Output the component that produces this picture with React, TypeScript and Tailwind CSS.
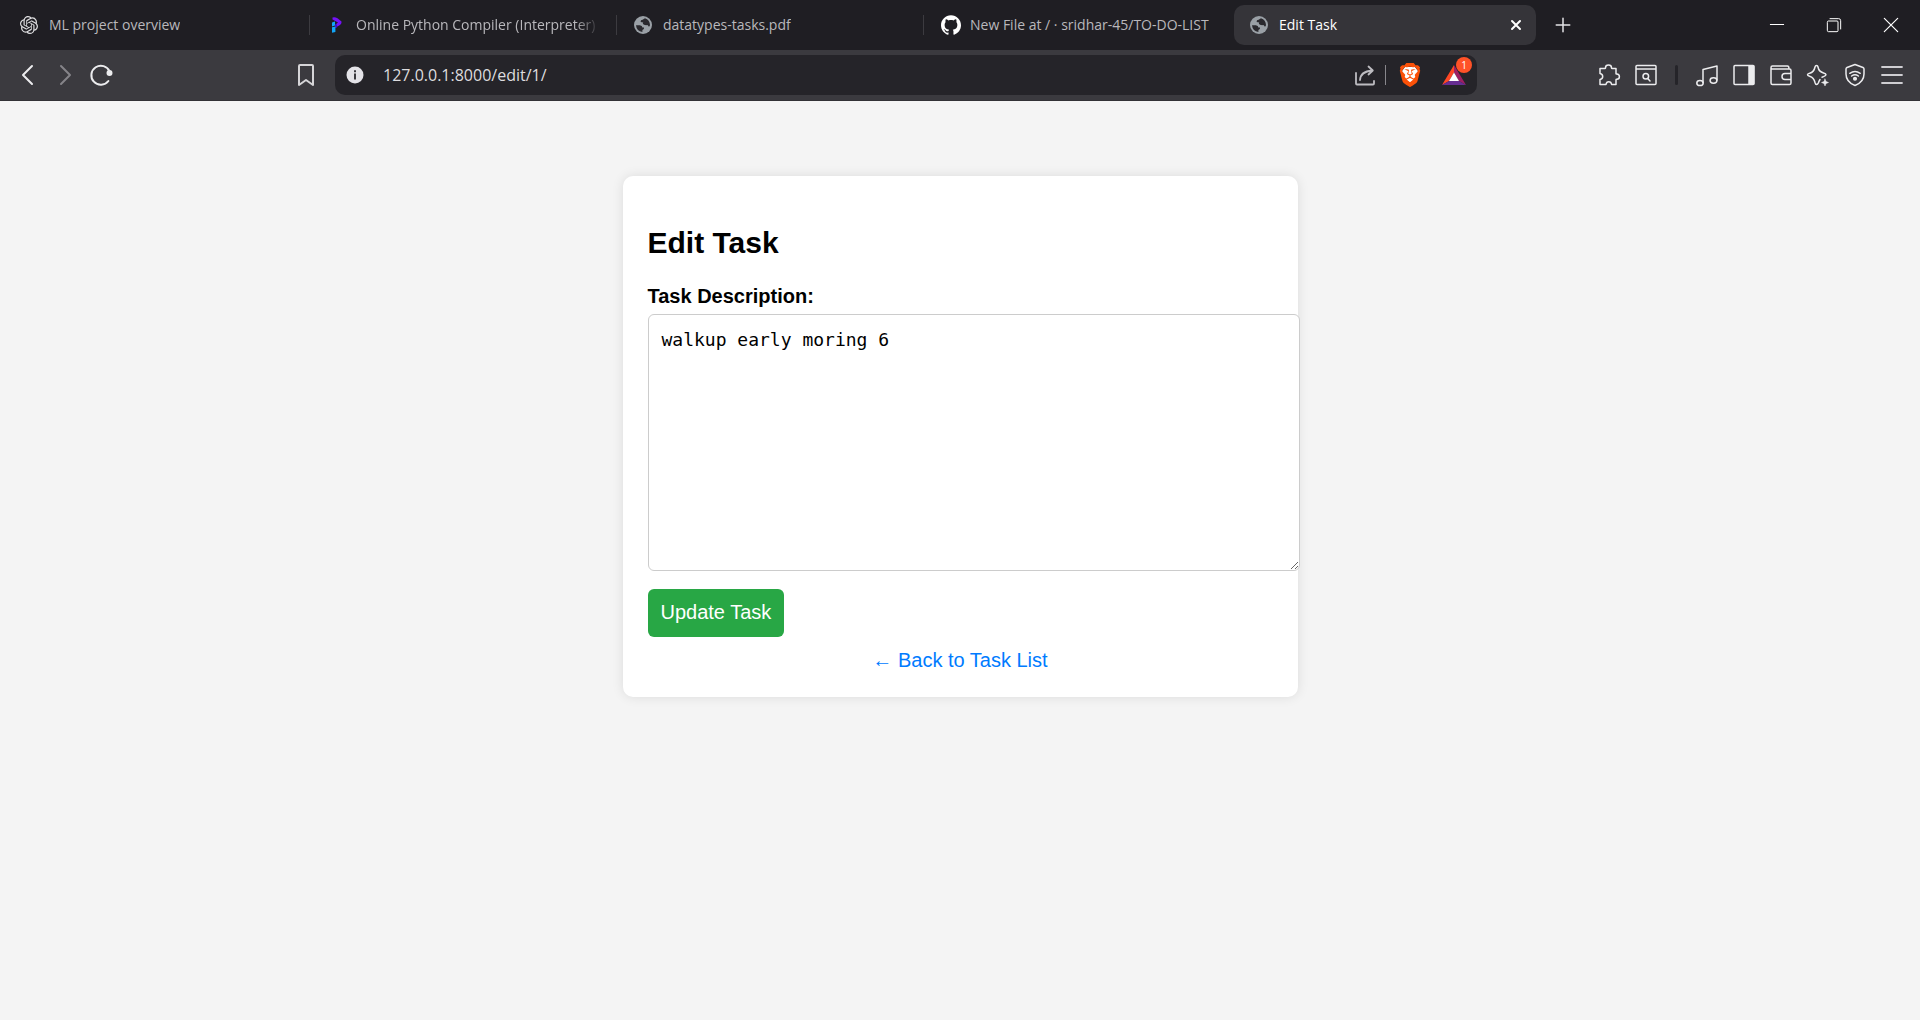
import React from "react";
import { SiBrave, SiGithub, SiOpenai } from "react-icons/si";

type IconProps = { className?: string };

function GlobeIcon({ className }: IconProps) {
  return (
    <svg viewBox="0 0 18 18" className={className} aria-hidden="true">
      <circle cx="9" cy="9" r="9" fill="#9aa0a6" />
      <path
        d="M2 9.2 L5.8 9.2 Q8.4 9.4 8.4 11.4 L10 11.6 Q10.6 13.6 8.4 13.9 L8.4 16 Q2.6 15.2 2 9.2 Z"
        fill="#2a292e"
      />
      <path
        d="M11 2.2 Q15.8 4 16 9 Q15.6 11 14.6 10.4 Q13.6 8.4 12.2 9.2 L10 8.8 Q8 7.6 9.2 6.4 L6.6 6 Q6.4 3.8 8.6 3.8 Z"
        fill="#2a292e"
      />
    </svg>
  );
}

function ProgramizIcon({ className }: IconProps) {
  return (
    <svg viewBox="0 0 11 16" className={className} aria-hidden="true">
      <path d="M1.5 0.5 Q4 -0.2 6.5 1.2 L10.5 4.6 Q10.8 6.6 9 8 L4.6 10.6 L4 8 L7 5.4 L1.5 2.4 Z" fill="#7412f7" />
      <path d="M1 5.6 L4 4.4 L4 8.6 L1 9.6 Z" fill="#12a5f7" />
      <path d="M4 8 L6 7 L6 10.4 L4 11 Z" fill="#3a0fd0" />
      <path d="M1 10.2 L4.4 9.4 L4.4 15 L1 15.8 Z" fill="#12a5f7" />
    </svg>
  );
}

function Stroke({ className, children, w = 1.5 }: IconProps & { children: React.ReactNode; w?: number }) {
  return (
    <svg
      viewBox="0 0 24 24"
      className={className}
      fill="none"
      stroke="currentColor"
      strokeWidth={w}
      strokeLinecap="round"
      strokeLinejoin="round"
      aria-hidden="true"
    >
      {children}
    </svg>
  );
}

function BraveIcon() {
  return (
    <svg viewBox="0 0 24 24" className="size-6" aria-hidden="true">
      <path d="M7 4 H17 L20 8 L17 18 L12 22 L7 18 L4 8 Z" fill="#fff" />
      <SiBrave color="#fb5108" size={24} />
    </svg>
  );
}

function RewardsIcon() {
  return (
    <svg viewBox="0 0 24 20" className="h-5 w-6" aria-hidden="true">
      <path d="M12 0 L0 20 L7 16 L12 7.5 Z" fill="#ff4724" />
      <path d="M12 0 L24 20 L17 16 L12 7.5 Z" fill="#9e1f63" />
      <path d="M0 20 H24 L17 16 H7 Z" fill="#662d91" />
      <path d="M12 7.5 L17 16 H7 Z" fill="#fff" />
    </svg>
  );
}

type TabProps = { icon: React.ReactNode; title: string; first?: boolean; fade?: boolean };

function Tab({ icon, title, first = false, fade = false }: TabProps) {
  return (
    <div className="flex h-10 w-[307px] min-w-0 items-center">
      <span className={first ? "ml-0.5 w-px" : "ml-0.5 h-5 w-px bg-[#3c3b40]"} />
      <button type="button" className="flex min-w-0 flex-1 items-center pl-[17px] text-left">
        <span className="flex w-[29px] shrink-0 items-center">{icon}</span>
        <span
          className={
            fade
              ? "w-[244px] overflow-hidden whitespace-nowrap [mask-image:linear-gradient(to_right,black_90%,transparent)]"
              : "truncate"
          }
        >
          {title}
        </span>
      </button>
    </div>
  );
}

function TabStrip() {
  return (
    <div className="flex h-[50px] items-center bg-[#1f1e23] text-sm text-[#b9b8bc]">
      <Tab icon={<SiOpenai className="size-[18px] text-[#dedee0]" />} title="ML project overview" first />
      <Tab icon={<ProgramizIcon className="ml-1 h-4 w-[11px]" />} title="Online Python Compiler (Interpreter)" fade />
      <Tab icon={<GlobeIcon className="size-[18px]" />} title="datatypes-tasks.pdf" />
      <Tab icon={<SiGithub className="size-5 text-white" />} title="New File at / · sridhar-45/TO-DO-LIST" />
      <div className="ml-1.5 flex h-10 w-[302px] items-center rounded-[10px] bg-[#353439] pr-3.5 pl-4 text-white">
        <button type="button" className="flex flex-1 items-center gap-[11px] text-left">
          <GlobeIcon className="size-[18px]" />
          Edit Task
        </button>
        <button type="button" aria-label="Close tab">
          <Stroke className="size-3" w={4}>
            <path d="M4 4 L20 20 M20 4 L4 20" />
          </Stroke>
        </button>
      </div>
      <button type="button" aria-label="New tab" className="ml-[18px] text-[#e4e3e6]">
        <Stroke className="size-[18px]" w={2}>
          <path d="M12 3 V21 M3 12 H21" />
        </Stroke>
      </button>
      <div className="ml-auto flex items-center gap-[41px] pr-[21px] text-white">
        <button type="button" aria-label="Minimize">
          <Stroke className="size-4">
            <path d="M2 11.25 H22" />
          </Stroke>
        </button>
        <button type="button" aria-label="Restore">
          <Stroke className="size-4">
            <path d="M2 7.5 Q2 6 3.5 6 H16.5 Q18 6 18 7.5 V20.5 Q18 22 16.5 22 H3.5 Q2 22 2 20.5 Z M6 2.5 H19 Q22 2.5 22 5.5 V18" />
          </Stroke>
        </button>
        <button type="button" aria-label="Close window">
          <Stroke className="size-4" w={1.8}>
            <path d="M2 2 L22 22 M22 2 L2 22" />
          </Stroke>
        </button>
      </div>
    </div>
  );
}

function Toolbar() {
  return (
    <div className="flex h-[51px] items-center border-b border-[#323136] bg-[#3b3a3f] text-[#ececee]">
      <div className="flex w-[335px] items-center pr-5 pl-4">
        <button type="button" aria-label="Back">
          <Stroke className="size-6" w={2}>
            <path d="M16 3 L7 12 L16 21" />
          </Stroke>
        </button>
        <button type="button" aria-label="Forward" className="ml-[13px] text-[#858489]">
          <Stroke className="size-6" w={2}>
            <path d="M8 3 L17 12 L8 21" />
          </Stroke>
        </button>
        <button type="button" aria-label="Reload" className="ml-3">
          <Stroke className="size-6" w={2}>
            <path d="M19.4 18 A9.5 9.5 0 1 1 20.6 8.5" />
            <circle cx="20.5" cy="10" r="2" fill="currentColor" />
          </Stroke>
        </button>
        <button type="button" aria-label="Bookmark this page" className="ml-auto text-[#d6d5d8]">
          <svg
            viewBox="0 0 18 24"
            className="h-6 w-[18px]"
            fill="none"
            stroke="currentColor"
            strokeWidth="2"
            strokeLinejoin="round"
            aria-hidden="true"
          >
            <path d="M2 3 Q2 2 3 2 H15 Q16 2 16 3 V22 L9 17 L2 22 Z" />
          </svg>
        </button>
      </div>
      <div className="flex h-10 min-w-0 flex-1 items-center rounded-[10px] bg-[#252429] px-[11px]">
        <svg viewBox="0 0 18 18" className="size-[18px]" aria-hidden="true">
          <circle cx="9" cy="9" r="8.5" fill="#e4e3e8" />
          <path d="M8 7.5 H10 V13.5 H8 Z M8 4.2 H10 V6.2 H8 Z" fill="#3a393e" />
        </svg>
        <input
          aria-label="Address"
          defaultValue="127.0.0.1:8000/edit/1/"
          className="ml-[19px] min-w-0 flex-1 bg-transparent text-base text-[#dddcdf] outline-none"
        />
        <button type="button" aria-label="Share" className="text-[#bdbcc1]">
          <Stroke className="size-6" w={1.8}>
            <path d="M3 10 V20.5 Q3 21.5 4 21.5 H20 Q21 21.5 21 20.5 V18 M7 17 Q7.5 8.5 19 7.5 M15.5 3.5 L19.8 7.5 L15.5 11.5" />
          </Stroke>
        </button>
        <span className="mr-3 ml-2 h-5 w-px bg-[#88878c]" />
        <button type="button" aria-label="Brave Shields">
          <BraveIcon />
        </button>
        <button type="button" aria-label="Brave Rewards" className="relative ml-5">
          <RewardsIcon />
          <span className="absolute -top-2 left-3.5 flex size-4 items-center justify-center rounded-full bg-[#ff5227] text-[10px] text-white">
            1
          </span>
        </button>
      </div>
      <div className="flex w-[443px] items-center justify-end gap-[13px] pr-4">
        <button type="button" aria-label="Extensions">
          <Stroke className="size-6">
            <path d="M3 5.5 H8 Q8.6 5.4 8.5 4.6 Q8.6 2 11.5 2 Q14.4 2 14.5 4.6 Q14.4 5.4 15 5.5 H19 V10.4 Q19 11.2 19.8 11.1 Q22.4 11.2 22.4 13.7 Q22.4 16.2 19.8 16.3 Q19 16.2 19 17 V21.5 H14.6 Q14.2 18.7 11.8 18.7 Q9.4 18.7 9 21.5 H3 V16.5 Q5.7 16.2 5.7 13.6 Q5.7 11 3 10.6 Z" />
          </Stroke>
        </button>
        <button type="button" aria-label="Search tabs">
          <Stroke className="size-6">
            <path d="M2 3.5 Q2 2.5 3 2.5 H21 Q22 2.5 22 3.5 V20.5 Q22 21.5 21 21.5 H3 Q2 21.5 2 20.5 Z M2 6 H22 M13.7 15.5 L16 18" />
            <circle cx="11.8" cy="13.3" r="2.8" />
          </Stroke>
        </button>
        <span className="mx-1 h-5 w-[3px] rounded bg-[#252429]" />
        <button type="button" aria-label="Media">
          <Stroke className="size-6">
            <path d="M8 19.5 V6.5 L22 3 V17" />
            <ellipse cx="5" cy="20" rx="3.2" ry="2.6" />
            <ellipse cx="18.5" cy="17.5" rx="3.4" ry="2.7" />
          </Stroke>
        </button>
        <button type="button" aria-label="Sidebar">
          <Stroke className="size-6">
            <path d="M2 3.5 Q2 2.5 3 2.5 H21 Q22 2.5 22 3.5 V20.5 Q22 21.5 21 21.5 H3 Q2 21.5 2 20.5 Z" />
            <path d="M17 3 H21.5 V21 H17 Z" fill="currentColor" />
          </Stroke>
        </button>
        <button type="button" aria-label="Wallet">
          <Stroke className="size-6">
            <path d="M2 5 V20 Q2 21.5 3.5 21.5 H20.5 Q22 21.5 22 20 V7.5 Q22 6 20.5 6 H3 Q2 6 2 4.5 Q2 3 3.5 3 H18.5 Q19.8 3 20 5.5 M22 10.5 H16 Q13 10.5 13 13.5 Q13 16.5 16 16.5 H22" />
          </Stroke>
        </button>
        <button type="button" aria-label="Leo AI">
          <Stroke className="size-6">
            <path d="M14 16.5 Q13 18 12.3 20 Q11.6 21.5 10.5 21.5 Q9.5 21.5 9 19.5 Q8 14.6 3.6 13.2 Q1.5 12.6 1.5 11.8 Q1.5 10.8 3.6 10.3 Q8 9 9 4 Q9.4 2.5 10.5 2.5 Q11.7 2.5 12 4 Q12.8 8.6 17.5 10 Q20 10.8 20 11.8 Q20 12.6 17.5 13.6 L16 14.2" />
            <path d="M19 16 L20 18.5 L22.5 19.5 L20 20.5 L19 23 L18 20.5 L15.5 19.5 L18 18.5 Z" fill="currentColor" strokeWidth="0.5" />
          </Stroke>
        </button>
        <button type="button" aria-label="VPN">
          <Stroke className="size-6">
            <path d="M12 1.5 L20 4.5 Q21 5 21 6 V11 Q21 19 12 22.5 Q3 19 3 11 V6 Q3 5 4 4.5 Z M6.8 10.3 Q12 6.8 17.2 10.3 M8.6 13 Q12 10.6 15.4 13" />
            <circle cx="12" cy="15.8" r="1.3" fill="currentColor" />
          </Stroke>
        </button>
        <button type="button" aria-label="Menu" className="text-[#cfced2]">
          <Stroke className="size-6" w={1.8}>
            <path d="M2 4 H22 M2 12 H22 M2 20 H22" />
          </Stroke>
        </button>
      </div>
    </div>
  );
}

export default function App() {
  return (
    <div className="min-h-screen bg-[#f4f4f4]">
      <header className="font-['Open_Sans','Noto_Sans',sans-serif]">
        <TabStrip />
        <Toolbar />
      </header>
      <main className="px-4 pt-[75px] font-['Liberation_Sans',Arial,sans-serif] text-xl text-black">
        <div className="mx-auto max-w-[675px] rounded-[10px] bg-white px-[25px] pt-[50px] pb-[25px] shadow-[0_0_12px_rgba(0,0,0,0.1)]">
          <h1 className="text-3xl leading-[34px] font-bold">Edit Task</h1>
          <form onSubmit={(e) => e.preventDefault()}>
            <label htmlFor="description" className="mt-[25px] block leading-[23px] font-bold">
              Task Description:
            </label>
            <textarea
              id="description"
              defaultValue="walkup early moring 6"
              className="mt-1.5 block h-[257px] w-[calc(100%+27px)] resize rounded-md border border-[#ccc] bg-white p-[13px] font-['DejaVu_Sans_Mono',monospace] text-lg leading-6 outline-none"
            />
            <button type="submit" className="mt-[18px] block rounded-md bg-[#28a745] px-[13px] pt-3 pb-[13px] leading-[23px] text-white">
              Update Task
            </button>
          </form>
          <a href="#tasks" className="mt-3 block text-center leading-[23px] text-[#007bff]">
            ← Back to Task List
          </a>
        </div>
      </main>
    </div>
  );
}
